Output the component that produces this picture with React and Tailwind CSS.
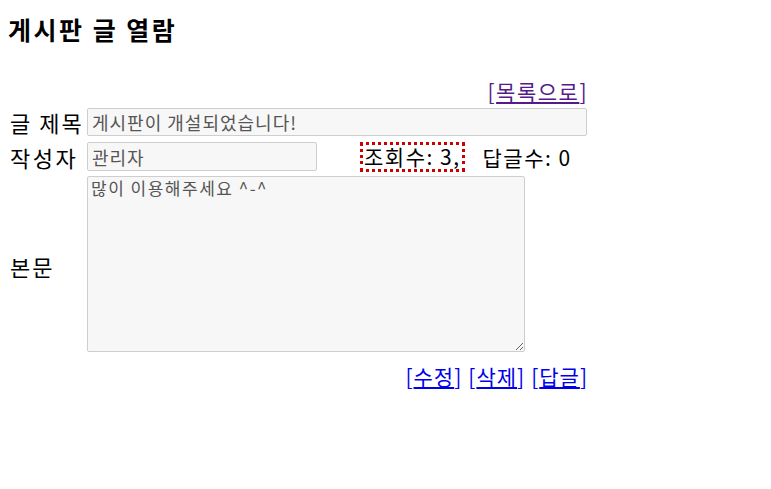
import React from "react";

const font = { fontFamily: '"Noto Sans CJK KR", "Noto Sans", sans-serif' };

function BracketLink({ children, visited }) {
  const color = visited ? "text-[#551a8b]" : "text-[#0000ee]";
  return (
    <span className={color}>
      [<a href="#" className="underline">{children}</a>]
    </span>
  );
}

export default function App() {
  return (
    <div
      className="min-h-screen bg-white text-black px-[8px] pt-[14px] text-[21px] leading-[24px] tracking-[1.5px]"
      style={font}
    >
      <h3 className="text-[25px] font-bold leading-[30px] tracking-[2.5px]">게시판 글 열람</h3>

      <div className="w-[580px] mt-[33px] flex flex-col">
        <div className="flex justify-end h-[28px] items-center">
          <BracketLink visited>목록으로</BracketLink>
        </div>

        <div className="flex items-center h-[34px]">
          <div className="w-[79px] pl-[2px] text-[22px] tracking-[2px]">글 제목</div>
          <input
            readOnly
            value="게시판이 개설되었습니다!"
            className="w-[500px] h-[28px] bg-[#f7f7f7] border border-[#cecece] rounded-[2px] px-[4px] text-[18px] tracking-[1px] text-[#555] outline-none"
            style={font}
          />
        </div>

        <div className="flex items-center h-[35px]">
          <div className="w-[79px] pl-[2px] text-[22px] tracking-[2.5px]">작성자</div>
          <input
            readOnly
            value="관리자"
            className="w-[230px] h-[29px] bg-[#f7f7f7] border border-[#cecece] rounded-[2px] px-[4px] text-[18px] tracking-[1px] text-[#555] outline-none"
            style={font}
          />
          <div className="ml-[43px] h-[30px] px-[1px] border-[3px] border-dotted border-[#cc0000] flex items-center leading-none">
            조회수: 3,
          </div>
          <div className="ml-[18px]">답글수: 0</div>
        </div>

        <div className="flex items-center py-[2px]">
          <div className="w-[79px] pl-[2px] pt-[4px] text-[22px] tracking-[2px]">본문</div>
          <textarea
            readOnly
            value="많이 이용해주세요 ^-^"
            className="w-[438px] h-[176px] bg-[#f7f7f7] border border-[#cecece] rounded-[2px] px-[3px] py-[1px] text-[17px] tracking-[1.5px] leading-[20px] text-[#555] outline-none"
            style={font}
          />
        </div>

        <div className="flex justify-end gap-[6px] mt-[10px] tracking-[1px]">
          <BracketLink>수정</BracketLink>
          <BracketLink>삭제</BracketLink>
          <BracketLink>답글</BracketLink>
        </div>
      </div>
    </div>
  );
}
